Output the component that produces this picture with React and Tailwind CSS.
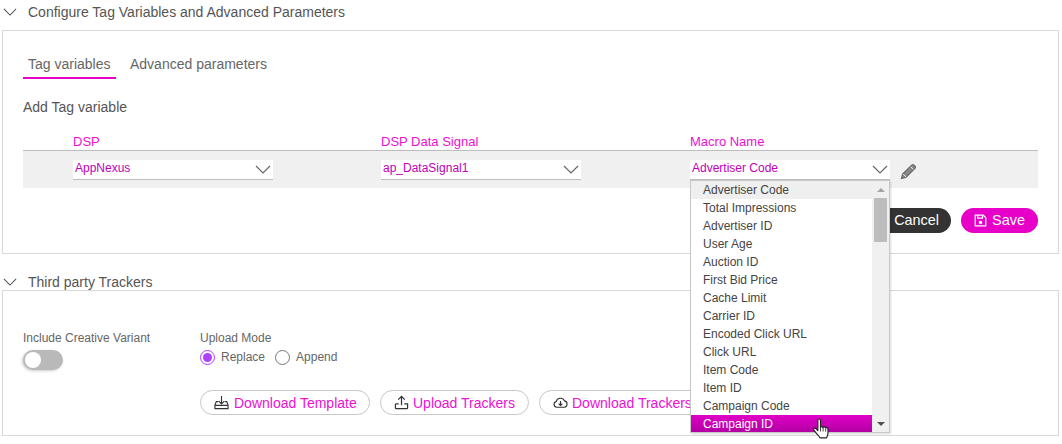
const F = "font-['Liberation_Sans',sans-serif]";
function Chev({ className = "" }) {
  return (
    <svg viewBox="0 0 16 9" className={className} fill="none" stroke="currentColor" strokeWidth="1.2">
      <path d="M1 1l7 7 7-7" />
    </svg>
  );
}
function Select({ value, w = "w-[308px]" }) {
  return (
    <div className={`${w} shrink-0 relative`}>
      <div className="w-[200px] h-5 bg-white border-b border-[#bdbdbd] flex items-center justify-between pl-[2px] pr-[2px]">
        <span className="text-[12px] text-[#c000b8] leading-none -mt-[2px]">{value}</span>
        <Chev className="w-[16px] h-[9px] text-[#666]" />
      </div>
    </div>
  );
}
const items = ["Advertiser Code","Total Impressions","Advertiser ID","User Age","Auction ID","First Bid Price","Cache Limit","Carrier ID","Encoded Click URL","Click URL","Item Code","Item ID","Campaign Code","Campaign ID"];
function Dropdown() {
  return (
    <div className="absolute left-[690px] top-[180px] w-[200px] h-[253px] bg-white border border-[#c8c8c8] flex shadow-[1px_1px_2px_rgba(0,0,0,0.15)] z-10">
      <div className="flex-1 flex flex-col overflow-hidden">
        {items.map((t, i) => (
          <div key={t} className={`h-[18px] shrink-0 pl-3 flex items-center text-[12px] leading-none ${i === 0 ? "bg-[#efefef] text-[#444]" : i === 13 ? "bg-gradient-to-b from-[#e000c8] to-[#b000a0] text-white" : "text-[#444]"}`}>{t}</div>
        ))}
      </div>
      <div className="w-[17px] bg-[#f0f0f0] flex flex-col items-center relative">
        <div className="h-[17px] flex items-center justify-center">
          <div className="w-0 h-0 border-x-[4px] border-x-transparent border-b-[4px] border-b-[#a3a3a3]" />
        </div>
        <div className="w-[13px] h-[44px] bg-[#bdbdbd]" />
        <div className="flex-1" />
        <div className="h-[17px] flex items-center justify-center">
          <div className="w-0 h-0 border-x-[4px] border-x-transparent border-t-[4px] border-t-[#505050]" />
        </div>
      </div>
    </div>
  );
}
function Hand() {
  return (
    <svg viewBox="0 0 18 22" className="absolute left-[812px] top-[418px] w-[19px] h-[23px] z-20">
      <path d="M5.5 2.2c0-1.600 2.500-1.600 2.500 0V9c.1-1 2.400-1 2.500.2.2-1 2.300-.9 2.500.4.3-.8 2.200-.5 2.200.9v4.200c0 2-.8 3-1.400 4.300H7.500c-.6-1.400-2-2.600-3.300-4.200L1.700 11.600c-.9-1.500 1-2.600 2.200-1.300L5.500 12z" fill="#fff" stroke="#222" strokeWidth="1.1" strokeLinejoin="round" />
      <path d="M8 9v4M10.500 9.500v3.500M13 10v3" stroke="#222" strokeWidth=".8" />
    </svg>
  );
}
function Header({ children, className }) {
  return (
    <div className={`flex items-center h-6 text-[14px] text-[#555] ${className}`}>
      <Chev className="w-[14px] h-[8px] ml-[1px] mr-[11px] text-[#555]" />
      <span>{children}</span>
    </div>
  );
}
function Btn({ icon, children, w }) {
  return (
    <div className={`${w} h-[25px] shrink-0 rounded-full border border-[#c8c8c8] bg-white flex items-center pl-[13px] gap-[4px] text-[14px] text-[#ec10d2] whitespace-nowrap overflow-hidden`}>
      {icon}<span className="pt-[1px]">{children}</span>
    </div>
  );
}
const DownloadIc = (
  <svg viewBox="0 0 16 16" className="w-[15px] h-[15px] mr-[1px]" fill="none" stroke="#333" strokeWidth="1.200">
    <path d="M8 1v8M5 6.500 8 9.500l3-3" />
    <path d="M4.500 7H2.500L1 10.500V14.500H15V10.500L13.500 7H11.500M1 11h14" />
  </svg>
);
const UploadIc = (
  <svg viewBox="0 0 16 16" className="w-[15px] h-[15px]" fill="none" stroke="#333" strokeWidth="1.300">
    <path d="M8 11V1.500M4.500 5 8 1.500 11.500 5" />
    <path d="M1.500 9.500v4a1 1 0 0 0 1 1h11a1 1 0 0 0 1-1v-4H11M5 9.500H1.500" />
  </svg>
);
const CloudIc = (
  <svg viewBox="0 0 16 16" className="w-[15px] h-[15px]" fill="none" stroke="#333" strokeWidth="1.200">
    <path d="M4 13a3 3 0 0 1-.6-5.900A4.700 4.700 0 0 1 12.300 6.300 3.400 3.400 0 0 1 12 13z" />
    <path d="M8 6.500v4.500M6 9.200 8 11.200l2-2" />
  </svg>
);
export default function App() {
  return (
    <div className={`${F} relative w-[1062px] h-[444px] bg-white overflow-hidden`}>
      <div className="pl-[2px] pr-[3px]">
        <Header className="h-[24px]">Configure Tag Variables and Advanced Parameters</Header>
        <div className="mt-[6px] h-[224px] border border-[#d9d9d9] pl-5 pr-5">
          <div className="flex pt-[21px] gap-[14px] text-[14px] text-[#666]">
            <div className="border-b-2 border-[#e600c8] px-[5px] h-[27px] leading-[24px] w-[93px]">Tag variables</div>
            <div className="leading-[24px]">Advanced parameters</div>
          </div>
          <div className="mt-[18px] text-[14px] leading-[20px] text-[#555]">Add Tag variable</div>
          <div className="flex pl-[50px] mt-[17px] text-[13px] leading-[16px] text-[#ec10d2]">
            <div className="w-[308px]">DSP</div>
            <div className="w-[309px]">DSP Data Signal</div>
            <div>Macro Name</div>
          </div>
          <div className="h-[38px] border-t border-[#bdbdbd] bg-[#f0f0f0] flex items-center pl-[50px]">
            <Select value="AppNexus" />
            <Select value="ap_DataSignal1" w="w-[309px]" />
            <Select value="Advertiser Code" w="w-[200px]" />
            <svg viewBox="0 0 16 16" className="w-[17px] h-[17px] ml-[10px] mt-[3px]" fill="none" stroke="#6b6b6b" strokeWidth="1.300">
              <path d="M1.500 14.500l1-4L11 2a1.500 1.500 0 0 1 2.200 0l.8.8a1.500 1.500 0 0 1 0 2.200l-8.500 8.500z" fill="#8a8a8a" />
              <path d="M3 10.500l2.500 2.500M10 3.500l2.500 2.500" stroke="#fff" strokeWidth=".8" />
            </svg>
          </div>
          <div className="flex justify-end gap-[10px] mt-5">
            <div className="h-[25px] w-[75px] rounded-full bg-[#333] text-white text-[14.4px] flex items-center justify-end pr-3">Cancel</div>
            <div className="h-[25px] w-[77px] rounded-full bg-[#e600c8] text-white text-[14.4px] flex items-center justify-center gap-[5px]">
              <svg viewBox="0 0 16 16" className="w-[13px] h-[13px]" fill="none" stroke="#fff" strokeWidth="1.500">
                <path d="M1.500 1.500h10l3 3v10h-13z" />
                <path d="M4.500 1.500v3.500h6v-3.500" />
                <circle cx="8" cy="10.500" r="1.500" fill="#fff" />
              </svg>
              Save
            </div>
          </div>
        </div>
        <Header className="mt-[16px]">Third party Trackers</Header>
        <div className="h-[146px] -mt-[4px] border border-[#d9d9d9] pl-5 relative">
          <div className="flex pt-[39px]">
            <div className="w-[177px]">
              <div className="text-[12px] leading-[16px] text-[#666]">Include Creative Variant</div>
              <div className="relative w-10 h-5 rounded-full bg-[#b9b9b9] mt-[4px] shadow-[-1px_1px_3px_rgba(0,0,0,0.2)]">
                <div className="absolute left-[2px] top-[2px] w-4 h-4 rounded-full bg-white" />
              </div>
            </div>
            <div>
              <div className="text-[12px] leading-[16px] text-[#666]">Upload Mode</div>
              <div className="flex items-center h-5 mt-[1px] text-[12px] text-[#666]">
                <div className="w-[15px] h-[15px] rounded-full border border-[#b040ff] flex items-center justify-center">
                  <div className="w-[9px] h-[9px] rounded-full bg-[#b040ff]" />
                </div>
                <span className="ml-[6px] mr-[10px]">Replace</span>
                <div className="w-[15px] h-[15px] rounded-full border border-[#777]" />
                <span className="ml-[6px]">Append</span>
              </div>
            </div>
          </div>
          <div className="flex gap-[10px] pl-[177px] mt-[20px]">
            <Btn icon={DownloadIc} w="w-[170px]">Download Template</Btn>
            <Btn icon={UploadIc} w="w-[149px]">Upload Trackers</Btn>
            <Btn icon={CloudIc} w="w-[170px]">Download Trackers</Btn>
          </div>
        </div>
      </div>
      <Dropdown />
      <Hand />
    </div>
  );
}
